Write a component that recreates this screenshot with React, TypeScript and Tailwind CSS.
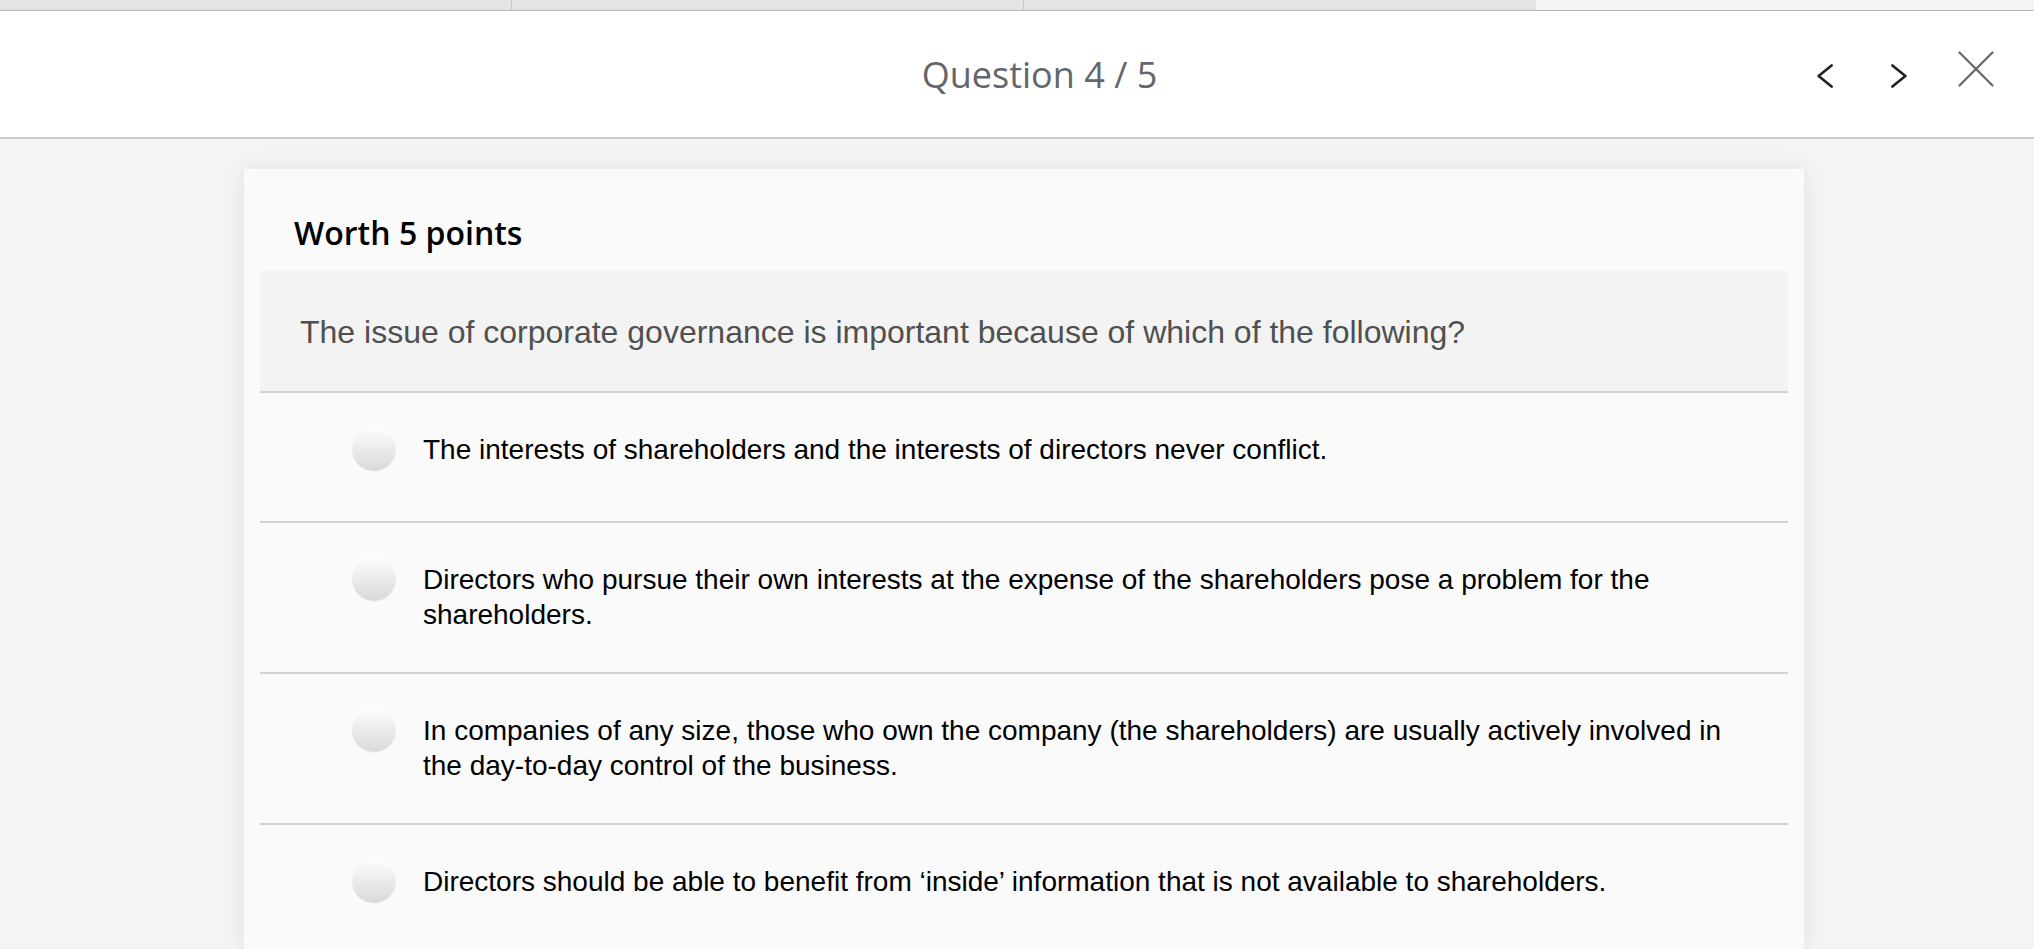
import React from "react";

const options: string[] = [
	"The interests of shareholders and the interests of directors never conflict.",
	"Directors who pursue their own interests at the expense of the shareholders pose a problem for the shareholders.",
	"In companies of any size, those who own the company (the shareholders) are usually actively involved in the day-to-day control of the business.",
	"Directors should be able to benefit from \u2018inside\u2019 information that is not available to shareholders.",
];

const ProgressBar: React.FC = () => (
	<div className="flex h-[11px] border-b border-[#b8b8b8]">
		<div className="w-[512px] bg-[#e3e4e6] border-r border-[#c6c6c6]"></div>
		<div className="w-[512px] bg-[#e3e4e6] border-r border-[#c6c6c6]"></div>
		<div className="w-[512px] bg-[#e3e4e6]"></div>
		<div className="flex-1 bg-[#f5f5f5]"></div>
	</div>
);

const Header: React.FC = () => (
	<header className="grid grid-cols-[1fr_auto_1fr] items-center h-[128px] bg-white border-b-2 border-[#cacaca]">
		<div></div>
		<h1 className="ml-[45px] font-['Open_Sans',sans-serif] text-[36px] leading-[49px] text-[#63666a]">
			Question 4 / 5
		</h1>
		<div className="flex items-center justify-end pr-[40px]">
			<button className="mt-[3px]" aria-label="Previous">
				<svg width="16" height="24" viewBox="0 0 16 24" fill="none">
					<path
						d="M14.6 1.4 L1.6 12 L14.6 22.6"
						stroke="#222"
						strokeWidth="2.6"
						strokeLinecap="round"
						strokeLinejoin="round"
					/>
				</svg>
			</button>
			<button className="ml-[58px] mt-[3px]" aria-label="Next">
				<svg width="16" height="24" viewBox="0 0 16 24" fill="none">
					<path
						d="M1.4 1.4 L14.4 12 L1.4 22.6"
						stroke="#222"
						strokeWidth="2.6"
						strokeLinecap="round"
						strokeLinejoin="round"
					/>
				</svg>
			</button>
			<button className="ml-[51px] -mt-[10px]" aria-label="Close">
				<svg width="36" height="36" viewBox="0 0 36 36" fill="none">
					<path
						d="M1.5 1.5 L34.5 34.5 M34.5 1.5 L1.5 34.5"
						stroke="#666"
						strokeWidth="2.2"
						strokeLinecap="round"
					/>
				</svg>
			</button>
		</div>
	</header>
);

const Option: React.FC<{ text: string }> = ({ text }) => (
	<li className="flex items-start pt-[34px] pb-[40px] pl-[92px] pr-[48px] border-b-2 border-[#d3d3d3]">
		<span className="shrink-0 w-[44px] h-[44px] mb-[10px] rounded-full bg-linear-to-b from-[#fdfdfd] to-[#d9d9d9] shadow-[0_1px_1px_rgba(0,0,0,0.04)]"></span>
		<p className="flex-1 ml-[27px] mt-[6px] font-['Liberation_Sans',Arial,sans-serif] text-[28px] leading-[34.5px] text-black">
			{text}
		</p>
	</li>
);

export default function App() {
	return (
		<div className="min-h-screen h-[949px] overflow-hidden bg-[#f4f4f4]">
			<ProgressBar />
			<Header />
			<main className="pt-[30px]">
				<section className="ml-[244px] w-[1560px] bg-[#fafafa] px-[16px] pt-[43px] shadow-[0_0_22px_rgba(0,0,0,0.08)]">
					<h2 className="pl-[34px] font-['Open_Sans',sans-serif] font-semibold text-[32px] leading-[42px] text-black">
						Worth 5 points
					</h2>
					<div className="mt-[17px] bg-[#f3f3f3] pl-[40px] pt-[43px] pb-[40px] border-b-2 border-[#d3d3d3]">
						<p className="font-['Liberation_Sans',Arial,sans-serif] text-[32px] leading-[37px] text-[#505050]">
							The issue of corporate governance is important because of which of the following?
						</p>
					</div>
					<ul>
						{options.map((o) => (
							<Option key={o} text={o} />
						))}
					</ul>
				</section>
			</main>
		</div>
	);
}
